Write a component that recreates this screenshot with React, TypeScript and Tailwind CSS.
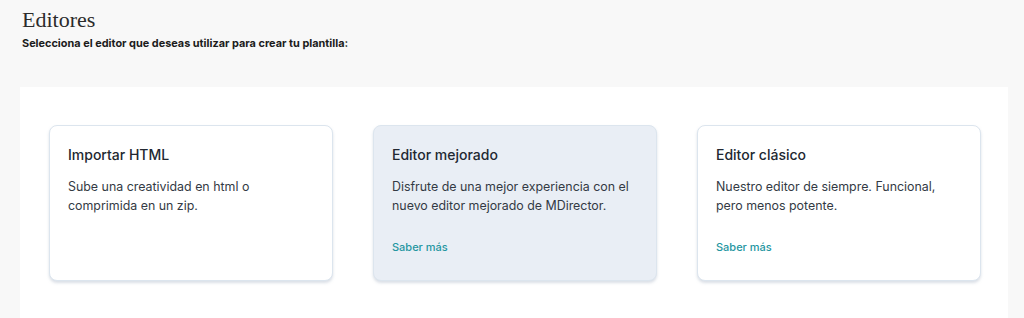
const cards = [
  {
    title: 'Importar HTML',
    text: 'Sube una creatividad en html o comprimida en un zip.',
    link: false,
    active: false,
  },
  {
    title: 'Editor mejorado',
    text: 'Disfrute de una mejor experiencia con el nuevo editor mejorado de MDirector.',
    link: true,
    active: true,
  },
  {
    title: 'Editor clásico',
    text: 'Nuestro editor de siempre. Funcional, pero menos potente.',
    link: true,
    active: false,
  },
];

export default function App() {
  return (
    <div className="min-h-[318px] bg-[#f8f8f8] pl-5 pr-4 pt-[6px] font-['Inter',sans-serif]">
      <h1 className="pl-[2px] font-['Liberation_Serif',serif] text-[22px] leading-[28px] text-[#2b2b2b]">Editores</h1>
      <p className="mt-[2px] pl-[2px] text-[10.9px] font-bold leading-[14px] text-[#1c1c1c]">
        Selecciona el editor que deseas utilizar para crear tu plantilla:
      </p>
      <div className="mt-[37px] h-[240px] bg-white pl-[29px] pr-[27px] pt-[38px]">
        <div className="grid grid-cols-3 gap-10">
          {cards.map((c) => (
            <div
              key={c.title}
              className={`h-[156px] rounded-lg border border-[#dce5ee] px-[18px] pt-[20px] shadow-[0_2px_3px_rgba(148,163,184,0.35)] ${
                c.active ? 'bg-[#e9eef5]' : 'bg-white'
              }`}
            >
              <h2 className="text-[14px] font-medium leading-[18px] text-[#222831]">{c.title}</h2>
              <p className="mt-[13px] text-[12.4px] leading-[19px] text-[#333a44]">{c.text}</p>
              {c.link && (
                <a className="mt-[25px] block text-[11px] font-medium leading-[14px] text-[#2596a1]" href="#">
                  Saber más
                </a>
              )}
            </div>
          ))}
        </div>
      </div>
    </div>
  );
}
